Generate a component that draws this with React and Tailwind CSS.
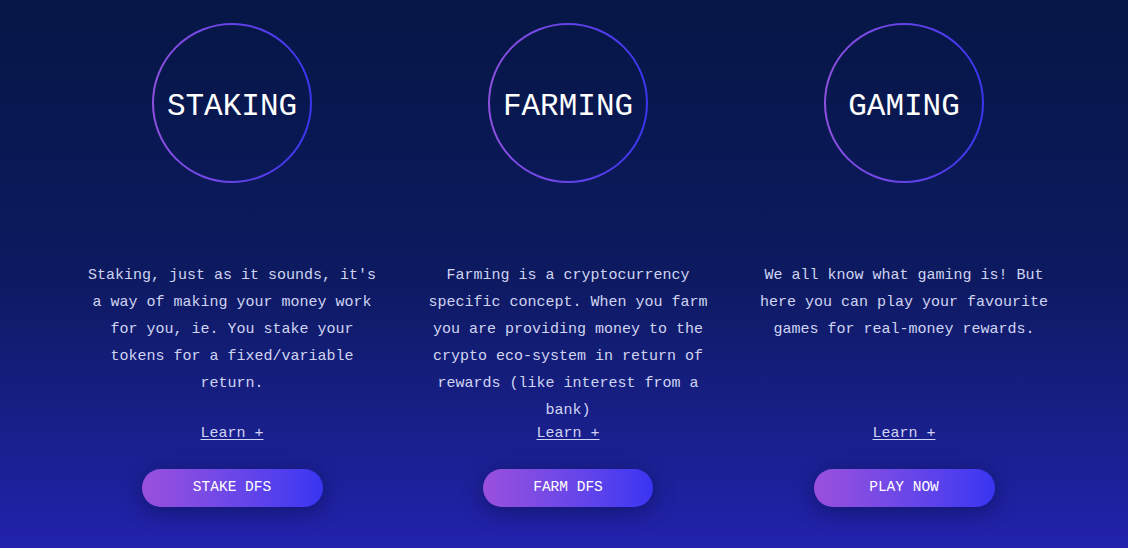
import React from 'react';

const features = [
    {
        title: 'STAKING',
        text: "Staking, just as it sounds, it's a way of making your money work for you, ie. You stake your tokens for a fixed/variable return.",
        cta: 'STAKE DFS',
        width: 'w-[181px]',
    },
    {
        title: 'FARMING',
        text: 'Farming is a cryptocurrency specific concept. When you farm you are providing money to the crypto eco-system in return of rewards (like interest from a bank)',
        cta: 'FARM DFS',
        width: 'w-[170px]',
    },
    {
        title: 'GAMING',
        text: 'We all know what gaming is! But here you can play your favourite games for real-money rewards.',
        cta: 'PLAY NOW',
        width: 'w-[181px]',
    },
];

const Ring = ({ id }) => (
    <svg className="absolute inset-0" width="160" height="160" viewBox="0 0 160 160">
        <defs>
            <linearGradient id={id} x1="0" y1="0" x2="1" y2="0">
                <stop offset="0%" stopColor="#8e4fe0" />
                <stop offset="100%" stopColor="#3b35ee" />
            </linearGradient>
        </defs>
        <circle cx="80" cy="80" r="79" fill="none" stroke={`url(#${id})`} strokeWidth="2" />
    </svg>
);

const FeatureCard = ({ item, index }) => {
    return (
        <div className="flex flex-col items-center px-[18px]">
            <div className="relative mt-[23px] flex h-[160px] w-[160px] items-center justify-center">
                <Ring id={`ring-${index}`} />
                <span className="relative pt-[6px] text-[31px] leading-none text-white">{item.title}</span>
            </div>
            <p className="mt-[79px] h-[158px] text-center text-[15px] leading-[27px] text-[#d0d4f2]">
                {item.text}
            </p>
            <a href="#" className="text-[15px] leading-[27px] text-[#d0d4f2] underline underline-offset-2">
                Learn +
            </a>
            <button
                className={`mt-[22px] h-[38px] ${item.width} rounded-full bg-gradient-to-r from-[#9a4fdc] to-[#3934f2] text-[14.5px] text-white shadow-[0_4px_22px_rgba(5,10,50,0.45)]`}
            >
                {item.cta}
            </button>
        </div>
    );
};

const App = () => {
    return (
        <section
            className="h-[548px] w-full overflow-hidden bg-gradient-to-b from-[#061645] via-[#0d1a60] to-[#2222ad]"
            style={{ fontFamily: '"Liberation Mono", "DejaVu Sans Mono", monospace' }}
        >
            <div className="grid grid-cols-3 pl-[64px] pr-[56px]">
                {features.map((item, index) => (
                    <FeatureCard key={item.title} item={item} index={index} />
                ))}
            </div>
        </section>
    );
};

export default App;
